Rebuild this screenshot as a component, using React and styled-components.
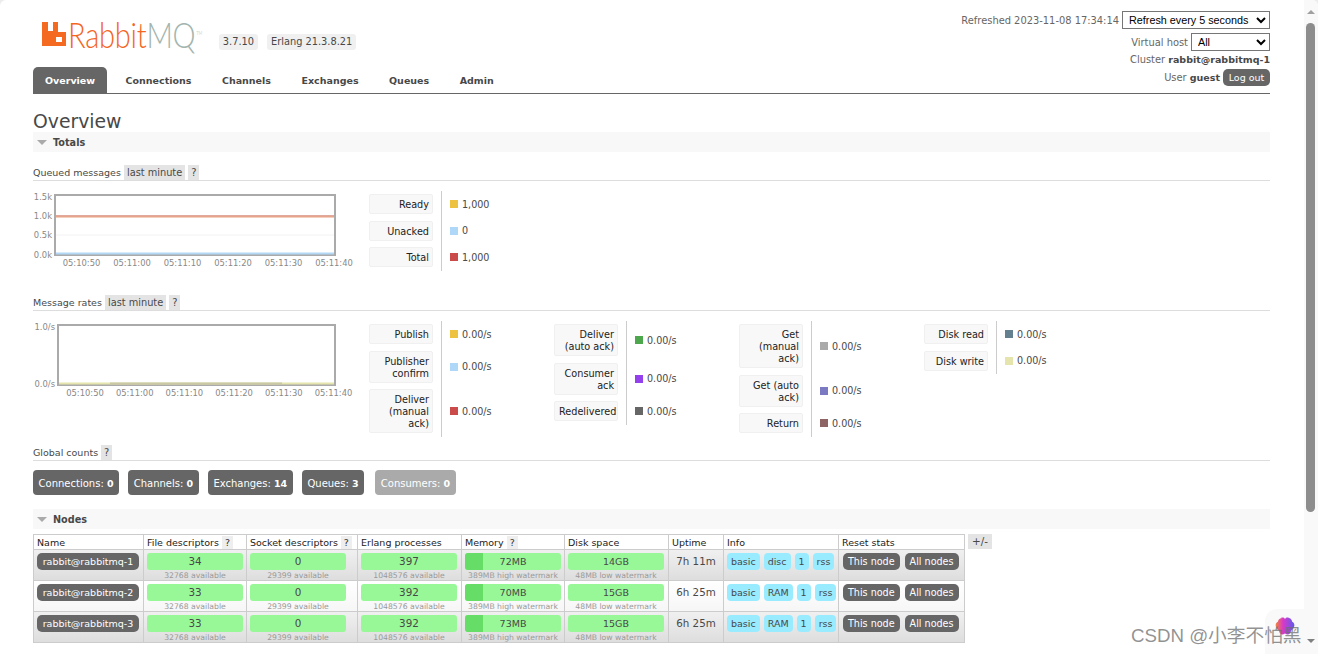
import React from 'react';
import styled, { createGlobalStyle } from 'styled-components';

const Global = createGlobalStyle`
  html, body { margin: 0; padding: 0; background: #ececec; }
  body { font-family: "DejaVu Sans", Verdana, sans-serif; font-size: 9.9px; color: #484848; }
  b { font-size: 9.5px; }
`
const Window = styled.div`
  position: relative;
  display: flex;
  width: 1318px;
  height: 654px;
  overflow: hidden;
  background: #fff;
  border-radius: 6px 6px 0 0;
`
const Page = styled.main`
  flex: 1;
  min-width: 0;
  padding: 0 34px 0 33px;
`
const Header = styled.header`
  display: flex;
  justify-content: space-between;
  height: 93px;
  border-bottom: 1px solid #666;
`
const Brand = styled.div`
  display: flex;
  flex-direction: column;
`
const LogoRow = styled.div`
  display: flex;
  align-items: flex-end;
  height: 67px;
  padding: 0 0 17px 9px;
  box-sizing: border-box;
`
const LogoIcon = styled.svg`
  flex: none;
  margin-bottom: 4px;
`
const Wordmark = styled.span`
  display: inline-block;
  font-family: Lato, "Liberation Sans", sans-serif;
  font-weight: 300;
  font-size: 35px;
  line-height: 30px;
  letter-spacing: -0.3px;
  color: #f4651e;
  margin: 0 -26px 1.5px 2px;
  transform: scaleX(0.83);
  transform-origin: left center;
  em { font-style: normal; color: #a3b5ae; }
  sup { font-size: 5px; line-height: 0; letter-spacing: 0; color: #a3b5ae; margin-left: 1px; }
`
const Version = styled.span`
  background: #f0f0f0;
  border-radius: 3px;
  padding: 0 4px;
  font-size: 9.8px;
  line-height: 16px;
  margin-left: ${p => p.$first ? '15px' : '9px'};
`
const Tabs = styled.nav`
  display: flex;
  gap: 6.5px;
`
const Tab = styled.a`
  padding: 0 12px;
  height: 26px;
  line-height: 27px;
  font-size: 9.5px;
  font-weight: bold;
  color: ${p => p.$active ? '#fff' : '#484848'};
  background: ${p => p.$active ? '#666' : 'transparent'};
  border-radius: 5px 5px 0 0;
`
const Status = styled.div`
  display: flex;
  flex-direction: column;
  align-items: flex-end;
  padding-top: 11px;
  color: #666;
  b { color: #484848; }
`
const StatusLine = styled.div`
  display: flex;
  align-items: center;
  justify-content: flex-end;
  height: ${p => p.$h}px;
  margin-top: ${p => p.$top || 0}px;
  gap: 3px;
`
const Select = styled.select`
  font-family: "Liberation Sans", Arial, sans-serif;
  font-size: 10.8px;
  color: #000;
  background: #fff;
  border: 1px solid #767676;
  border-radius: 0;
  width: ${p => p.$w}px;
  height: 18px;
  padding: 0 0 0 2px;
`
const LogOut = styled.button`
  font: inherit;
  font-size: 9.5px;
  color: #fff;
  background: #666;
  border: 0;
  border-radius: 5px;
  width: 47px;
  height: 17px;
  padding: 0;
`
const Title = styled.h1`
  font-size: 18.8px;
  font-weight: normal;
  line-height: 21px;
  margin: 17px 0 0;
  color: #484848;
`
const SectionHead = styled.h2`
  display: flex;
  align-items: center;
  gap: 6px;
  height: 20px;
  margin: ${p => p.$top || 0}px 0 0;
  padding-left: 4px;
  background: #f8f8f8;
  font-size: 9.7px;
  font-weight: bold;
  color: #484848;
  &::before {
    content: "";
    border-style: solid;
    border-width: 5px 5px 0 5px;
    border-color: #aaa transparent transparent transparent;
  }
`
const SubHead = styled.div`
  display: flex;
  align-items: center;
  gap: 3px;
  height: 16px;
  margin-top: ${p => p.$top}px;
  border-bottom: 1px solid #ddd;
  font-size: 9.5px;
`
const Chip = styled.span`
  background: #e4e4e4;
  padding: 0 3px;
  height: 15px;
  line-height: 15px;
  font-size: 9.8px;
  color: #484848;
`
const PlusMinus = styled(Chip)`
  font-size: 10.4px;
  padding: 0 4px;
`
const UpdatesRow = styled.div`
  display: flex;
  align-items: flex-start;
  margin-top: 10px;
`
const ChartSlot = styled.div`
  width: 336px;
  flex: none;
  svg { display: block; }
`
const Legend = styled.div`
  width: 185px;
  flex: none;
`
const LegendRow = styled.div`
  display: flex;
  align-items: stretch;
`
const LabelCell = styled.div`
  width: 64px;
  flex: none;
  padding: 3.25px 0;
`
const LabelBox = styled.div`
  background: #f8f8f8;
  border: 1px solid #f0f0f0;
  border-radius: 2px;
  box-sizing: border-box;
  padding: 4px 3px 2px 4px;
  line-height: 12px;
  font-size: 9.7px;
  color: #222;
  text-align: right;
`
const ValueCell = styled.div`
  display: flex;
  align-items: center;
  margin-left: 8px;
  padding-left: 8px;
  border-left: 1px solid #ccc;
  gap: 4px;
  font-size: 9.6px;
  color: #484848;
`
const Swatch = styled.i`
  width: 8px;
  height: 8px;
  background: ${p => p.$c};
`
const Counts = styled.div`
  display: flex;
  gap: 9px;
  margin-top: 9px;
`
const Count = styled.a`
  padding: 0 5.6px;
  height: 25px;
  line-height: 27px;
  border-radius: 4px;
  font-size: 10px;
  color: #fff;
  background: ${p => p.$dim ? '#aaa' : '#666'};
  margin-left: ${p => p.$dim ? '2px' : '0'};
`
const NodesWrap = styled.div`
  display: flex;
  align-items: flex-start;
  gap: 3px;
  margin-top: 5px;
`
const Table = styled.table`
  border-collapse: collapse;
  table-layout: fixed;
  width: 931px;
  border: 1px solid #ccc;
  font-size: 9.5px;
`
const Th = styled.th`
  width: ${p => p.$w}px;
  height: 15px;
  padding: 1px 0 0 3px;
  border: 1px solid #ccc;
  background: #fff;
  font-weight: normal;
  color: #222;
  text-align: left;
  box-sizing: border-box;
  white-space: nowrap;
`
const HeadInner = styled.div`
  display: flex;
  align-items: center;
  gap: 3px;
`
const HelpChip = styled.span`
  background: #eee;
  height: 13px;
  line-height: 13px;
  padding: 0 3px;
  color: #333;
`
const Tr = styled.tr`
  height: 31px;
  background: ${p => p.$odd
    ? 'linear-gradient(#f0f0f0, #dddddd)'
    : 'linear-gradient(#ffffff, #f6f6f6)'};
`
const Td = styled.td`
  padding: 3px 3px 0;
  border: 1px solid #ccc;
  vertical-align: top;
  text-align: left;
  box-sizing: border-box;
  line-height: 17px;
  white-space: nowrap;
`
const NodeName = styled.a`
  display: block;
  width: 102px;
  height: 17px;
  line-height: 17px;
  text-align: center;
  border-radius: 5px;
  background: #666;
  color: #fff;
`
const Bar = styled.div`
  position: relative;
  width: 96px;
  height: 17px;
  line-height: 17px;
  border-radius: 3px;
  overflow: hidden;
  background: #98f898;
  color: #484848;
  text-align: center;
  font-size: ${p => p.$num ? '10.4px' : '9.5px'};
`
const BarFill = styled.div`
  position: absolute;
  left: 0;
  top: 0;
  bottom: 0;
  background: #66dd66;
`
const BarText = styled.span`
  position: relative;
`
const Sub = styled.div`
  width: 96px;
  font-size: 7.7px;
  line-height: 8px;
  margin-top: 2px;
  color: #999;
  text-align: center;
  white-space: nowrap;
`
const Uptime = styled.div`
  font-size: 10.3px;
  text-align: center;
`
const Tags = styled.div`
  display: flex;
  gap: 4px;
`
const Tag = styled.span`
  padding: 0 4px;
  height: 17px;
  line-height: 17px;
  border-radius: 4px;
  background: #99ebff;
  color: #484848;
`
const ResetBtns = styled.div`
  display: flex;
  gap: 5px;
  margin-left: 1px;
`
const ResetBtn = styled.a`
  padding: 0 5px;
  height: 17px;
  line-height: 17px;
  border-radius: 5px;
  background: #666;
  color: #fff;
  font-size: 9.6px;
`
const Scrollbar = styled.aside`
  position: relative;
  display: flex;
  flex-direction: column;
  align-items: center;
  width: 14px;
  flex: none;
  background: #f9f9f9;
`
const Arrow = styled.i`
  width: 0;
  height: 0;
  margin: ${p => p.$up ? '10px 0 9px' : '127px 0 0'};
  border-left: 4px solid transparent;
  border-right: 4px solid transparent;
  ${p => p.$up ? 'border-bottom: 4px solid #a0a0a0;' : 'border-top: 4px solid #808080;'}
`
const Thumb = styled.div`
  width: 9px;
  height: 489px;
  margin-left: -1px;
  border-radius: 5px;
  background: #8d8d8d;
`
const Watermark = styled.div`
  position: absolute;
  left: 1131px;
  top: 625px;
  font-family: "Liberation Sans", "Noto Sans CJK SC", sans-serif;
  font-size: 18.7px;
  line-height: 22px;
  color: rgba(110, 110, 110, 0.75);
  white-space: nowrap;
`
const Widget = styled.div`
  position: absolute;
  left: 1265px;
  top: 609px;
  width: 39px;
  height: 45px;
  border-radius: 12px 0 0 0;
  background: #f9f9f9;
  display: flex;
  justify-content: center;
  padding-top: 8px;
  box-sizing: border-box;
`

const font = '"DejaVu Sans", Verdana, sans-serif'

const Logo = () => (
  <LogoIcon width="24" height="24" viewBox="0 0 24 24">
    <path fill="#f46a21" fillRule="evenodd" d="M0 0h6v9h5V0h5v10h8v14H0z M14 15h6v5h-6z" />
  </LogoIcon>
)

const Chart = ({ left, yTicks, children, xTicks }) => (
  <svg width="330" height="80" viewBox="0 0 330 80">
    <rect x={left} y="4" width={302 - left} height="60" fill="#fff" stroke="#aaa" strokeWidth="2" />
    {children}
    {yTicks.map(([label, y]) => (
      <text key={label} x={left - 3} y={y} textAnchor="end" fontSize="8.4" fill="#888" fontFamily={font}>{label}</text>
    ))}
    {xTicks.map(([label, x]) => (
      <text key={label} x={x} y="75" textAnchor="middle" fontSize="8.4" fill="#888" fontFamily={font}>{label}</text>
    ))}
  </svg>
)

const times = ['05:10:50', '05:11:00', '05:11:10', '05:11:20', '05:11:30', '05:11:40']

const LegendGroup = ({ rows }) => (
  <Legend>
    {rows.map(([label, color, value]) => (
      <LegendRow key={label}>
        <LabelCell>
          <LabelBox>{label}</LabelBox>
        </LabelCell>
        <ValueCell>
          <Swatch $c={color} />
          {value}
        </ValueCell>
      </LegendRow>
    ))}
  </Legend>
)

const rateGroups = [
  [['Publish', '#edc240', '0.00/s'], ['Publisher confirm', '#afd8f8', '0.00/s'], ['Deliver (manual ack)', '#cb4b4b', '0.00/s']],
  [['Deliver (auto ack)', '#4da74d', '0.00/s'], ['Consumer ack', '#9440ed', '0.00/s'], ['Redelivered', '#666666', '0.00/s']],
  [['Get (manual ack)', '#aaaaaa', '0.00/s'], ['Get (auto ack)', '#7c79c3', '0.00/s'], ['Return', '#8d6363', '0.00/s']],
  [['Disk read', '#64808e', '0.00/s'], ['Disk write', '#e4e4ac', '0.00/s']],
]

const nodes = [
  { name: 'rabbit@rabbitmq-1', fd: 34, sock: 0, erl: 397, mem: '72MB', fill: 18, disk: '14GB', up: '7h 11m', tag: 'disc' },
  { name: 'rabbit@rabbitmq-2', fd: 33, sock: 0, erl: 392, mem: '70MB', fill: 18, disk: '15GB', up: '6h 25m', tag: 'RAM' },
  { name: 'rabbit@rabbitmq-3', fd: 33, sock: 0, erl: 392, mem: '73MB', fill: 18, disk: '15GB', up: '6h 25m', tag: 'RAM' },
]

export default function App() {
  return (
    <Window>
      <Global />
      <Page>
        <Header>
          <Brand>
            <LogoRow>
              <Logo />
              <Wordmark>Rabbit<em>MQ</em><sup>TM</sup></Wordmark>
              <Version $first>3.7.10</Version>
              <Version>Erlang 21.3.8.21</Version>
            </LogoRow>
            <Tabs>
              <Tab $active>Overview</Tab>
              <Tab>Connections</Tab>
              <Tab>Channels</Tab>
              <Tab>Exchanges</Tab>
              <Tab>Queues</Tab>
              <Tab>Admin</Tab>
            </Tabs>
          </Brand>
          <Status>
            <StatusLine $h={18}>
              Refreshed 2023-11-08 17:34:14
              <Select $w={148} defaultValue="5"><option value="5">Refresh every 5 seconds</option></Select>
            </StatusLine>
            <StatusLine $h={18} $top={4}>
              Virtual host
              <Select $w={79} defaultValue="all"><option value="all">All</option></Select>
            </StatusLine>
            <StatusLine $h={17}><span>Cluster <b>rabbit@rabbitmq-1</b></span></StatusLine>
            <StatusLine $h={17} $top={1}><span>User <b>guest</b></span><LogOut>Log out</LogOut></StatusLine>
          </Status>
        </Header>

        <Title>Overview</Title>
        <SectionHead>Totals</SectionHead>

        <SubHead $top={12}>Queued messages <Chip>last minute</Chip><Chip>?</Chip></SubHead>
        <UpdatesRow>
          <ChartSlot>
            <Chart left={22} yTicks={[['1.5k', 9], ['1.0k', 28], ['0.5k', 47], ['0.0k', 67]]} xTicks={times.map((t, i) => [t, 48.5 + i * 50.5])}>
              <line x1="23" x2="301" y1="44" y2="44" stroke="#f2f2f2" />
              <rect x="23" y="24.5" width="278" height="1" fill="#c4553a" />
              <rect x="23" y="25.5" width="278" height="1" fill="#ec9f7e" />
              <rect x="23" y="61.5" width="278" height="2" fill="#b2d8f5" />
            </Chart>
          </ChartSlot>
          <LegendGroup rows={[['Ready', '#edc240', '1,000'], ['Unacked', '#afd8f8', '0'], ['Total', '#cb4b4b', '1,000']]} />
        </UpdatesRow>

        <SubHead $top={23}>Message rates <Chip>last minute</Chip><Chip>?</Chip></SubHead>
        <UpdatesRow>
          <ChartSlot>
            <Chart left={25} yTicks={[['1.0/s', 9], ['0.0/s', 66]]} xTicks={times.map((t, i) => [t, 52 + i * 49.7])}>
              <rect x="26" y="61.5" width="275" height="2" fill="#e4e4ac" />
              <rect x="77" y="61.5" width="172" height="2" fill="#c9c9a6" />
            </Chart>
          </ChartSlot>
          {rateGroups.map((rows, i) => <LegendGroup key={i} rows={rows} />)}
        </UpdatesRow>

        <SubHead $top={7.5}>Global counts <Chip>?</Chip></SubHead>
        <Counts>
          <Count>Connections: <b>0</b></Count>
          <Count>Channels: <b>0</b></Count>
          <Count>Exchanges: <b>14</b></Count>
          <Count>Queues: <b>3</b></Count>
          <Count $dim>Consumers: <b>0</b></Count>
        </Counts>

        <SectionHead $top={14}>Nodes</SectionHead>
        <NodesWrap>
          <Table>
            <thead>
              <tr>
                <Th $w={110}>Name</Th>
                <Th $w={103}><HeadInner>File descriptors <HelpChip>?</HelpChip></HeadInner></Th>
                <Th $w={111}><HeadInner>Socket descriptors <HelpChip>?</HelpChip></HeadInner></Th>
                <Th $w={104}>Erlang processes</Th>
                <Th $w={103}><HeadInner>Memory <HelpChip>?</HelpChip></HeadInner></Th>
                <Th $w={104}>Disk space</Th>
                <Th $w={55}>Uptime</Th>
                <Th $w={115}>Info</Th>
                <Th $w={126}>Reset stats</Th>
              </tr>
            </thead>
            <tbody>
              {nodes.map((n, i) => (
                <Tr key={n.name} $odd={i !== 1}>
                  <Td><NodeName>{n.name}</NodeName></Td>
                  <Td><Bar $num>{n.fd}</Bar><Sub>32768 available</Sub></Td>
                  <Td><Bar $num>{n.sock}</Bar><Sub>29399 available</Sub></Td>
                  <Td><Bar $num>{n.erl}</Bar><Sub>1048576 available</Sub></Td>
                  <Td>
                    <Bar><BarFill style={{ width: n.fill }} /><BarText>{n.mem}</BarText></Bar>
                    <Sub>389MB high watermark</Sub>
                  </Td>
                  <Td><Bar>{n.disk}</Bar><Sub>48MB low watermark</Sub></Td>
                  <Td><Uptime>{n.up}</Uptime></Td>
                  <Td>
                    <Tags><Tag>basic</Tag><Tag>{n.tag}</Tag><Tag>1</Tag><Tag>rss</Tag></Tags>
                  </Td>
                  <Td>
                    <ResetBtns><ResetBtn>This node</ResetBtn><ResetBtn>All nodes</ResetBtn></ResetBtns>
                  </Td>
                </Tr>
              ))}
            </tbody>
          </Table>
          <PlusMinus>+/-</PlusMinus>
        </NodesWrap>
      </Page>
      <Scrollbar>
        <Arrow $up />
        <Thumb />
        <Arrow />
      </Scrollbar>
      <Widget>
        <svg width="20" height="20" viewBox="0 0 20 20">
          <defs>
            <linearGradient id="brain" x1="0" y1="0" x2="1" y2="0">
              <stop offset="0" stopColor="#f0843c" />
              <stop offset="0.4" stopColor="#d838c8" />
              <stop offset="1" stopColor="#5a5cf0" />
            </linearGradient>
          </defs>
          <path fill="url(#brain)" d="M6 1c2-1 3.500 0 4 1 .5-1 2-2 4-1 2 .5 3 2 3 3.500 2 1 3 3 2 5.500-.5 2-2 3-3 3.500 0 2-1.500 4-3.500 4-1.500 0-2.500-1-2.500-1.500 0 .5-1 1.500-2.500 1.500-2 0-3.500-2-3.500-4-1-.5-2.500-1.500-3-3.500-1-2.500 0-4.500 2-5.500 0-1.500 1-3 4-3.500z" />
        </svg>
      </Widget>
      <Watermark>CSDN @小李不怕黑</Watermark>
    </Window>
  );
}
